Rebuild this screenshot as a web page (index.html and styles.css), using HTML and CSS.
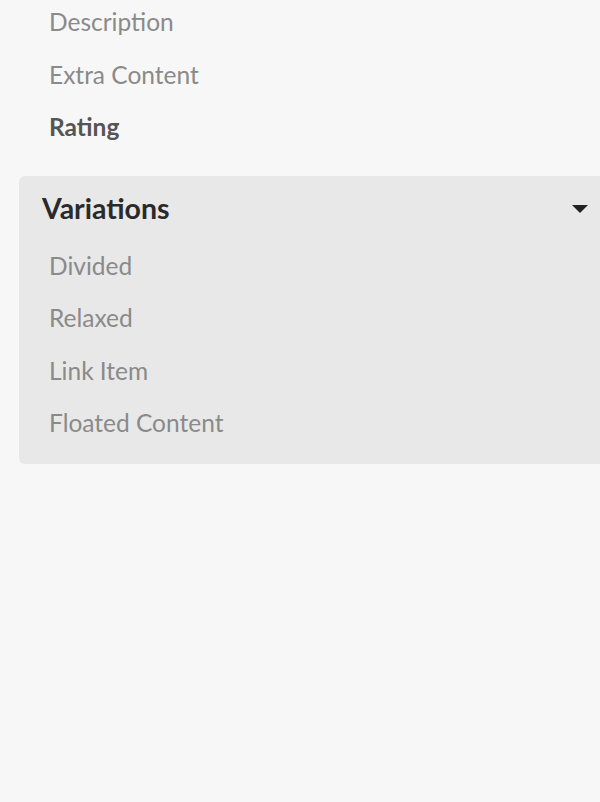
FILE: index.html
```html
<!DOCTYPE html>
<html>
<head>
<meta charset="utf-8">
<link rel="stylesheet" href="styles.css">
</head>
<body>
<div class="menu">
  <div class="list top">
    <a class="item">Description</a>
    <a class="item">Extra Content</a>
    <a class="item active">Rating</a>
  </div>
  <div class="section">
    <div class="header">
      <span>Variations</span>
      <svg class="caret" width="18" height="10" viewBox="0 0 18 10"><path d="M1 1 L17 1 L9 9 Z" fill="#222"/></svg>
    </div>
    <div class="list">
      <a class="item">Divided</a>
      <a class="item">Relaxed</a>
      <a class="item">Link Item</a>
      <a class="item">Floated Content</a>
    </div>
  </div>
</div>
</body>
</html>
```
FILE: styles.css
```css
html, body {
  margin: 0;
  padding: 0;
  background: #f7f7f7;
  font-family: Lato, "Open Sans", sans-serif;
  height: 100%;
}
.menu {
  padding: 0 0 0 19px;
}
.list {
  display: flex;
  flex-direction: column;
}
.top {
  margin-top: -4px;
  padding-left: 30px;
  margin-bottom: 22px;
}
.item {
  font-size: 24.5px;
  line-height: 52.5px;
  height: 52.5px;
  color: #8a8a8a;
}
.item.active {
  color: #555;
  font-weight: 700;
}
.section {
  background: #e8e8e8;
  border-radius: 6px 0 0 6px;
  padding: 11px 0 14px 0;
}
.header {
  display: flex;
  justify-content: space-between;
  align-items: center;
  padding: 0 11px 0 23px;
  font-size: 28.5px;
  font-weight: 700;
  color: #2a2a2a;
  height: 42px;
}
.caret {
  margin-top: 2px;
}
.section .list {
  padding-left: 30px;
  margin-top: 11px;
}
```
